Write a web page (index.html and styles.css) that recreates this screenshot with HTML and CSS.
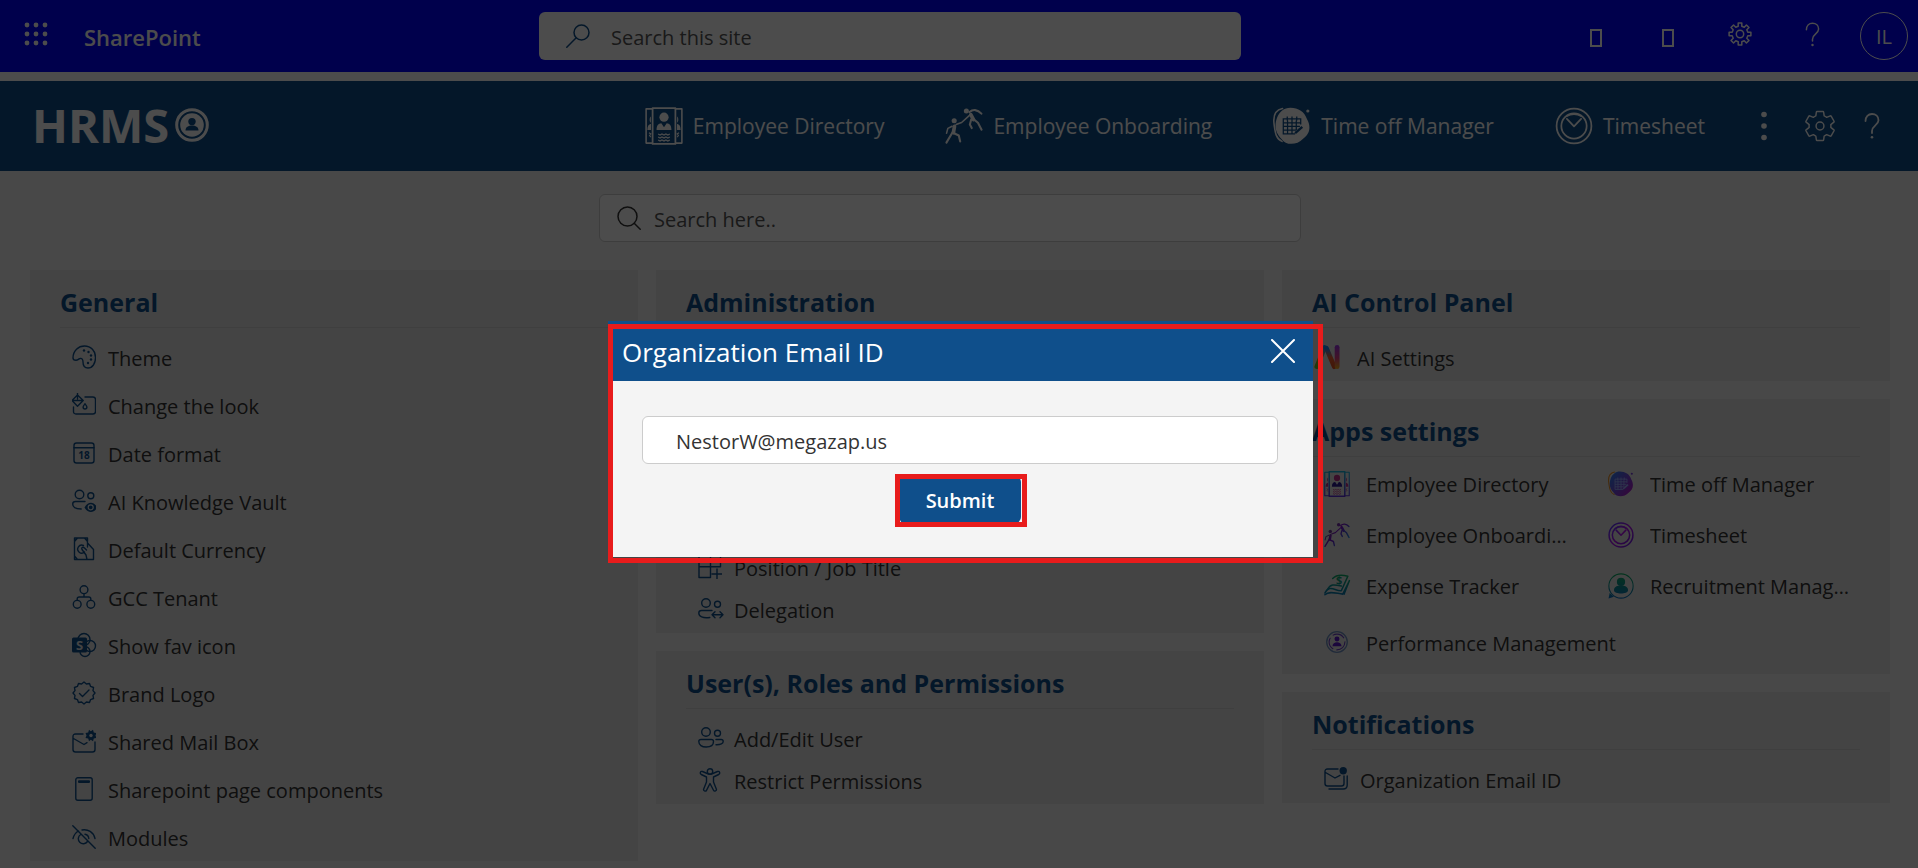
FILE: index.html
```html
<!DOCTYPE html>
<html lang="en">
<head>
<meta charset="utf-8">
<title>HRMS Settings</title>
<link rel="stylesheet" href="styles.css">
</head>
<body>
<svg class="sprite" aria-hidden="true">
  <defs>
    <linearGradient id="g-violet" gradientUnits="userSpaceOnUse" x1="0" y1="0" x2="24" y2="24"><stop offset="0" stop-color="#3b3bff"/><stop offset=".5" stop-color="#b010e8"/><stop offset="1" stop-color="#5a20e0"/></linearGradient>
    <linearGradient id="g-frame" gradientUnits="userSpaceOnUse" x1="0" y1="0" x2="0" y2="24"><stop offset="0" stop-color="#18b6d8"/><stop offset="1" stop-color="#5c2bd6"/></linearGradient>
    <linearGradient id="g-climb" gradientUnits="userSpaceOnUse" x1="6" y1="2" x2="24" y2="16"><stop offset="0" stop-color="#6a6a6a"/><stop offset=".4" stop-color="#7a10c8"/><stop offset="1" stop-color="#1296e0"/></linearGradient>
    <linearGradient id="g-green" gradientUnits="userSpaceOnUse" x1="0" y1="0" x2="0" y2="24"><stop offset="0" stop-color="#10b060"/><stop offset="1" stop-color="#0a6cc0"/></linearGradient>
    <linearGradient id="g-blob" gradientUnits="userSpaceOnUse" x1="2" y1="4" x2="22" y2="20"><stop offset="0" stop-color="#2f7df0"/><stop offset="1" stop-color="#b018c8"/></linearGradient>
    <linearGradient id="g-a" x1="0" y1="1" x2="1" y2="0"><stop offset="0" stop-color="#6ac030"/><stop offset=".5" stop-color="#f0a020"/><stop offset="1" stop-color="#2090f0"/></linearGradient>
    <linearGradient id="g-n" x1="0" y1="0" x2="0" y2="1"><stop offset="0" stop-color="#2080f0"/><stop offset=".5" stop-color="#f06030"/><stop offset="1" stop-color="#e05020"/></linearGradient>
    <linearGradient id="g-i" gradientUnits="userSpaceOnUse" x1="0" y1="0" x2="0" y2="24"><stop offset="0" stop-color="#9030e8"/><stop offset=".6" stop-color="#e04080"/><stop offset="1" stop-color="#f0a020"/></linearGradient>
  </defs>
  <symbol id="waffle" viewBox="0 0 24 24"><g class="f"><circle cx="3" cy="3" r="2.400"/><circle cx="12" cy="3" r="2.400"/><circle cx="21" cy="3" r="2.400"/><circle cx="3" cy="12" r="2.400"/><circle cx="12" cy="12" r="2.400"/><circle cx="21" cy="12" r="2.400"/><circle cx="3" cy="21" r="2.400"/><circle cx="12" cy="21" r="2.400"/><circle cx="21" cy="21" r="2.400"/></g></symbol>
  <symbol id="search-left" viewBox="0 0 24 24"><circle class="s" cx="15.500" cy="8.500" r="7.500"/><path class="s" d="M10.200 13.800.800 23.200"/></symbol>
  <symbol id="search" viewBox="0 0 24 24"><circle class="s" cx="10.500" cy="10.500" r="9.500"/><path class="s" d="m17.200 17.200 6 6"/></symbol>
  <symbol id="gear8" viewBox="0 0 24 24"><path class="s" d="M10.200 4.200V1.100h3.600v3.100l2.440 1.010 2.190-2.190 2.550 2.550-2.190 2.190 1.010 2.440h3.100v3.600h-3.100l-1.010 2.440 2.190 2.190-2.550 2.550-2.190-2.190-2.440 1.010v3.100h-3.600v-3.100l-2.440-1.010-2.190 2.190-2.550-2.550 2.190-2.190L4.200 13.800H1.100v-3.600h3.100l1.010-2.440-2.190-2.190 2.550-2.550 2.190 2.190z"/><circle class="s" cx="12" cy="12" r="3.700"/></symbol>
  <symbol id="gear6" viewBox="1 1 22 22"><path class="s thin" d="M19.430 12.980c.04-.32.07-.64.07-.98 0-.34-.03-.66-.07-.98l2.110-1.650c.19-.15.24-.42.12-.64l-2-3.460c-.09-.16-.26-.25-.44-.25-.06 0-.12.01-.17.03l-2.490 1c-.52-.4-1.080-.73-1.690-.98l-.38-2.650C14.460 2.180 14.250 2 14 2h-4c-.25 0-.46.18-.49.42l-.38 2.650c-.61.25-1.170.59-1.690.98l-2.490-1c-.06-.02-.12-.03-.18-.03-.17 0-.34.09-.43.25l-2 3.460c-.13.22-.07.49.12.64l2.110 1.650c-.04.32-.07.65-.07.98 0 .33.03.66.07.98l-2.110 1.650c-.19.15-.24.42-.12.64l2 3.460c.09.16.26.25.44.25.06 0 .12-.01.17-.03l2.490-1c.52.4 1.080.73 1.690.98l.38 2.650c.03.24.24.42.49.42h4c.25 0 .46-.18.49-.42l.38-2.650c.61-.25 1.170-.59 1.690-.98l2.490 1c.06.02.12.03.18.03.17 0 .34-.09.43-.25l2-3.460c.12-.22.07-.49-.12-.64z"/><circle class="s thin" cx="12" cy="12" r="2.700"/></symbol>
  <symbol id="question" viewBox="0 0 16 26"><path class="s" d="M1.500 8C1.500 3.500 4.300 1 8 1s6.500 2.500 6.500 6.200c0 5-6.500 5.300-6.500 10.800v2"/><circle class="f" cx="8" cy="24.200" r="1.300"/></symbol>
  <symbol id="dots" viewBox="0 0 6 30"><g class="f"><circle cx="3" cy="3.500" r="2.800"/><circle cx="3" cy="15" r="2.800"/><circle cx="3" cy="26.500" r="2.800"/></g></symbol>
  <symbol id="person-ring" viewBox="0 0 34 34"><circle class="s" stroke-width="3" cx="17" cy="17" r="15.300"/><circle class="f" cx="17" cy="17" r="11.800"/><circle cx="17" cy="13.600" r="3.700" fill="#0f4f8b"/><path d="M10.500 22.500c0-3.600 2.900-5 6.500-5s6.500 1.400 6.500 5z" fill="#0f4f8b"/></symbol>
  <symbol id="directory" viewBox="0 0 24 24"><path class="s thin" d="M4.500 1.200H.7v21.600h3.800M19.500 1.200h3.800v21.600h-3.800"/><rect class="s" x="4.800" y=".7" width="14.400" height="22.600"/><g class="f2"><circle cx="12" cy="6.400" r="2.900"/><path d="M3.700 6v4c-1-.6-1-3.400 0-4zM20.300 6v4c1-.6 1-3.400 0-4zM1.500 14.500c0-2.500.8-3.700 2.300-4v4zM22.500 14.500c0-2.500-.8-3.700-2.300-4v4z"/></g><path class="f3" d="M7.300 14.500c0-3 1.200-4.200 3-4.300l1.700 2.600 1.700-2.600c1.800.1 3 1.300 3 4.300z"/><path class="s2" d="m8.300 17 1.200.7 1.200-.7 1.300.7 1.200-.7 1.200.7 1.300-.7M8.300 18.900l1.200.7 1.200-.7 1.300.7 1.200-.7 1.200.7 1.300-.7M8.300 20.800l1.200.7 1.200-.7 1.300.7 1.200-.7 1.200.7 1.300-.7M2.500 16.300l1.200.7-.8 1 .8 1M21.500 16.300l-1.200.7.8 1-.8 1" stroke-width=".7"/></symbol>
  <symbol id="climb" viewBox="0 0 24 24"><circle class="f" cx="5.800" cy="8.700" r="1.600"/><circle class="f" cx="13.500" cy="2.500" r="1.600"/><path class="s" stroke-width="1" d="m7 11 3.500-1.200 4.800-4.300M4.500 12.200 1.800 13.500l-.8 3"/><path class="s" stroke-width="2.300" d="m6 12.200-.7 4M16.300 4.800 18 8"/><path class="s" stroke-width="1.300" d="M4.800 16 .9 22.500M5 16.300l3.700 1.700.9 3.800M15.500 3.200c2-1.800 5-1.800 7.500 1M16.500 8l-.8 3 1.200 2.300M18.500 8l2.300 2 2.300 4.300"/></symbol>
  <symbol id="timeoff" viewBox="0 0 24 24"><path class="s thin" style="stroke:var(--rim)" d="M6 1C1 2 0 6 .7 11s1 9 5 10.700"/><circle class="f" cx="22" cy="2.500" r="1"/><path class="f" d="M11 .5c5 0 9 2.500 10.500 7.300C24 12 23.500 17 19 20c-4 4.300-11 4.300-13.500.3C1 16 1 11 2.500 7 4 3 7 .5 11 .5z"/><g style="stroke:var(--cut)" fill="none" stroke-width=".8"><path d="M17.500 11V7.500h-11V17H14M9 6v2.500M12 6v2.500M15 6v2.500M6.500 10h11M6.500 12.300h10.500M6.500 14.600h8M9.200 8.500V17M12 8.500V17M14.700 8.500v6"/><path d="m14 16.500 4.500-4" stroke-width="1.500"/></g></symbol>
  <symbol id="clock" viewBox="0 0 24 24"><circle class="s" cx="12" cy="12" r="11"/><circle class="s" cx="12" cy="12" r="8"/><path class="s" d="m7.500 7.500 4.500 4.700 4.500-4.700M7.500 5.700c2.500-1.700 6.500-1.700 9 0"/></symbol>
  <symbol id="palette" viewBox="0 0 24 24"><path class="s" d="M1 13C1 5.500 6.500 1 12.500 1 19 1 23.500 6 23.500 12.500c0 6-3 10.500-7.500 10.500-3.500 0-5-2.500-5-6 0-2.500-1-4-3-3.500-1.500.3-2 1.800-4 1.800C1.800 15.300 1 14.500 1 13z"/><g class="f"><circle cx="12" cy="5.500" r="1.200"/><circle cx="16.500" cy="7" r="1.200"/><circle cx="19" cy="10.500" r="1.200"/><circle cx="19" cy="14.500" r="1.200"/><circle cx="16" cy="18" r="1.200"/></g></symbol>
  <symbol id="bucket" viewBox="0 0 24 24"><path class="s" d="M13 4h8q2.500 0 2.500 2.500v12Q23.500 21 21 21H4q-2.500 0-2.500-2.500V14M5.500 0v6M5.500 2 0 7.500l5.500 5.800L11.200 7.500zM.5 7.500h10.500M13 10.800c1.200 1.500 1.900 2.300 1.900 3.300a1.900 1.900 0 0 1-3.800 0c0-1 .7-1.800 1.900-3.300z"/></symbol>
  <symbol id="people-eye" viewBox="0 0 24 24"><circle class="s" cx="7.500" cy="5.500" r="4.300"/><circle class="s" cx="18.800" cy="6.800" r="3"/><path class="s" d="M13 12.500H3.500Q.7 12.500.7 15c0 3.500 3.500 5 8.500 5"/><path class="f" d="M12.500 18.500c3-6.500 10-6.500 12.500 0-2.500 6-9.500 6-12.500 0z"/><circle class="s" cx="18.700" cy="18.300" r="2.500" style="stroke:#e5e5e5" stroke-width="1.200"/></symbol>
  <symbol id="cash-hand" viewBox="0 0 24 24"><path class="s" d="M15.500 22.500h-13V1h13v9M2.500 4.500 5.500 1M15.500 4.500 12.500 1M2.500 19l3 3.500M11.500 8.500a4 4 0 1 0 1 6.500M16 6.500l5.500 6v10H15l-1-4.500-4-5.500c-1-2 1-3 2.500-1.500l2 2"/></symbol>
  <symbol id="tree" viewBox="0 0 24 24"><g class="s"><circle cx="12" cy="4.700" r="3.900"/><circle cx="5.200" cy="19.300" r="3.900"/><circle cx="18.800" cy="19.300" r="3.900"/><path d="M12 8.600V12M5.200 15.200V14q0-2 2-2h9.600q2 0 2 2v1.200"/></g></symbol>
  <symbol id="badge" viewBox="0 0 24 24"><path class="s" d="m12 1 2.410 2.020 3.090-.55 1.080 2.950L21.530 6.500l-.55 3.090L23 12l-2.020 2.410.55 3.090-2.950 1.080-1.080 2.950-3.090-.55L12 23l-2.410-2.020-3.090.55-1.080-2.950L2.470 17.500l.55-3.090L1 12l2.020-2.410-.55-3.090 2.950-1.080L6.500 2.470l3.090.55zM7.500 12.500l3 3 6.500-6.500"/></symbol>
  <symbol id="mail-gear" viewBox="0 0 24 24"><path class="s" d="M11 5H3.500Q1 5 1 7.500v13Q1 23 3.500 23h17q2.500 0 2.500-2.500V13M1.500 9.500 12 15.500l3-1.800"/><path class="f" d="m17 .8 1.800 1.400 2.200-1.400.8 2.700 2.700.5-1 2.500 1 2.500-2.700.5-.8 2.700-2.200-1.400L17 12.200l-.8-2.700-2.700-.5 1-2.500-1-2.500 2.700-.5z"/><circle cx="19" cy="6.500" r="1.700" fill="#e5e5e5"/></symbol>
  <symbol id="page" viewBox="0 0 24 24"><rect class="s" x="3.800" y=".8" width="16.400" height="22.400" rx="2"/><rect class="f" x="6" y="3.200" width="12" height="2.800" rx="1"/></symbol>
  <symbol id="eye-off" viewBox="0 0 24 24"><path class="s" d="m.8.800 22.400 22.400M1 13.500C2 9.500 4 7.300 6.500 6M10 5c6-1 11.500 2 13 8.500M8.700 9.500a5 5 0 1 0 6.800 7M13 9.200q3.500.5 3.800 4.300"/></symbol>
  <symbol id="grid-add" viewBox="0 0 24 24"><path class="s" d="M1 1h21.500v10.800H1zM1 11.800V22.500h11.500V1M19 14v10M14 19h10"/></symbol>
  <symbol id="delegation" viewBox="0 0 26 24"><circle class="s" cx="8" cy="6" r="4.300"/><circle class="s" cx="19.500" cy="7.200" r="3"/><path class="s" d="M14 13.500H3.500Q.8 13.500.8 16c0 3.500 4 5.500 11 4.500M14 17.800h11M17 14.800l-3 3 3 3M22 14.800l3 3-3 3"/></symbol>
  <symbol id="users" viewBox="0 0 26 24"><g class="s"><circle cx="8" cy="6" r="4.300"/><circle cx="19.500" cy="7.200" r="3"/><path d="M3 13.500h10.500q2 0 2 2c0 3.500-3 5.500-7.300 5.500S.8 19 .8 15.500q0-2 2.200-2zM18 13.500h5.200q2 0 2 2c0 2-2.500 3.500-7.200 3.300"/></g></symbol>
  <symbol id="body" viewBox="0 0 24 24"><path class="s" d="M9.200 5.500 4.500 3.500c-2-.8-3 2-1.200 3L8.500 9v5L5.700 21c-.7 2 2 2.800 2.800 1.300L12 15.500l3.500 6.800c.8 1.500 3.500.7 2.800-1.300L15.500 14V9l5.200-2.500c1.800-1 .8-3.800-1.200-3l-4.700 2c-1.600.7-4 .7-5.600 0z"/><circle class="s" cx="12" cy="3.500" r="2.700"/></symbol>
  <symbol id="ai" viewBox="0 0 27 26"><g fill="none" stroke-width="5" stroke-linecap="round"><path stroke="url(#g-a)" d="M3 23 11 3"/><path stroke="url(#g-n)" d="m13 4 8 19"/><path stroke="url(#g-i)" d="M24 3v20"/></g></symbol>
  <symbol id="recruit" viewBox="0 0 24 24"><circle class="s thin" cx="12" cy="12" r="11.200"/><circle class="f" cx="12" cy="8.200" r="3.800"/><path class="f" d="M5.500 16c0-3.500 3-4.500 6.500-4.500s6.500 1 6.500 4.500c0 4-13 4-13 0z"/><path class="f" d="m.5 23.500 1-5 4 3.500z"/></symbol>
  <symbol id="perf" viewBox="0 0 24 24"><circle cx="12" cy="12" r="9.500" fill="none" stroke="#6f8fc0" stroke-width="1.200"/><circle cx="12" cy="12" r="7.300" fill="none" stroke="#6a40c0" stroke-width="1" stroke-dasharray="12 3"/><circle cx="12" cy="9.300" r="2.300" fill="#5a18c8"/><path d="M7.800 16c0-5 8.400-5 8.400 0z" fill="#5a18c8"/></symbol>
  <symbol id="mail-dot" viewBox="0 0 24 24"><path class="s" d="M14 2H3.500Q1 2 1 4.500v12Q1 19 3.500 19h14q2.500 0 2.500-2.500V9M1.500 5.500 11 11l5-2.700M23.200 9v9q0 4-4 4H5"/><circle class="f" cx="19.200" cy="3.700" r="3.700"/></symbol>
  <symbol id="close" viewBox="0 0 24 24"><path class="s" stroke-width="2" d="m1 1 22 22M23 1 1 23"/></symbol>
</svg>

<header class="suite">
  <div class="suite-brand">
    <button class="plain" type="button" aria-label="App launcher"><svg class="ic24"><use href="#waffle"/></svg></button>
    <a class="suite-name" href="#">SharePoint</a>
  </div>
  <label class="suite-search"><svg class="ic24"><use href="#search-left"/></svg><input type="search" placeholder="Search this site" aria-label="Search this site"></label>
  <div class="suite-tools">
    <button class="plain" type="button" aria-label="Notifications"><span class="tofu"></span></button>
    <button class="plain" type="button" aria-label="Megaphone"><span class="tofu"></span></button>
    <button class="plain" type="button" aria-label="Settings"><svg class="ic24"><use href="#gear8"/></svg></button>
    <button class="plain" type="button" aria-label="Help"><svg class="q-small"><use href="#question"/></svg></button>
    <button class="avatar" type="button">IL</button>
  </div>
</header>

<nav class="nav">
  <a class="logo" href="#">HRMS<svg class="logo-ring"><use href="#person-ring"/></svg></a>
  <div class="nav-right">
    <div class="nav-links">
      <a href="#"><svg class="ic38"><use href="#directory"/></svg>Employee Directory</a>
      <a href="#"><svg class="ic38"><use href="#climb"/></svg>Employee Onboarding</a>
      <a href="#"><svg class="ic38"><use href="#timeoff"/></svg>Time off Manager</a>
      <a href="#"><svg class="ic38"><use href="#clock"/></svg>Timesheet</a>
    </div>
    <div class="nav-tools">
      <button class="plain" type="button" aria-label="More"><svg class="more"><use href="#dots"/></svg></button>
      <button class="plain" type="button" aria-label="Settings"><svg class="ic32"><use href="#gear6"/></svg></button>
      <button class="plain" type="button" aria-label="Help"><svg class="q-large"><use href="#question"/></svg></button>
    </div>
  </div>
</nav>

<main class="page">
  <label class="page-search"><svg class="ic24"><use href="#search"/></svg><input type="search" placeholder="Search here.." aria-label="Search here"></label>
  <div class="columns">
    <div class="column">
      <section class="card">
        <h2>General</h2>
        <ul class="list roomy">
          <li><a href="#"><svg class="ic-item"><use href="#palette"/></svg>Theme</a></li>
          <li><a href="#"><svg class="ic-item"><use href="#bucket"/></svg>Change the look</a></li>
          <li><a href="#"><svg class="ic-item" viewBox="0 0 24 24" aria-hidden="true"><rect class="s" x="2" y="2" width="20" height="20" rx="2.500"/><path class="s" d="M2 6.800h20"/><text class="f" x="12" y="18" text-anchor="middle" font-size="10" font-weight="700">18</text></svg>Date format</a></li>
          <li><a href="#"><svg class="ic-item"><use href="#people-eye"/></svg>AI Knowledge Vault</a></li>
          <li><a href="#"><svg class="ic-item"><use href="#cash-hand"/></svg>Default Currency</a></li>
          <li><a href="#"><svg class="ic-item"><use href="#tree"/></svg>GCC Tenant</a></li>
          <li><a href="#"><svg class="ic-item" viewBox="0 0 24 24" aria-hidden="true"><circle class="s" cx="12" cy="6.500" r="6"/><circle class="s" cx="18" cy="13" r="5.500"/><circle class="s" cx="13" cy="18.500" r="5"/><rect x="0" y="4.500" width="15" height="15" rx="1.500" class="f"/><text x="7.500" y="16.500" text-anchor="middle" font-size="13" font-weight="700" fill="#e5e5e5">S</text></svg>Show fav icon</a></li>
          <li><a href="#"><svg class="ic-item"><use href="#badge"/></svg>Brand Logo</a></li>
          <li><a href="#"><svg class="ic-item"><use href="#mail-gear"/></svg>Shared Mail Box</a></li>
          <li><a href="#"><svg class="ic-item"><use href="#page"/></svg>Sharepoint page components</a></li>
          <li><a href="#"><svg class="ic-item"><use href="#eye-off"/></svg>Modules</a></li>
        </ul>
      </section>
    </div>
    <div class="column">
      <section class="card tall">
        <h2>Administration</h2>
        <ul class="list compact">
          <li><a href="#"><svg class="ic-item"><use href="#grid-add"/></svg>Position / Job Title</a></li>
          <li><a href="#"><svg class="ic-people"><use href="#delegation"/></svg>Delegation</a></li>
        </ul>
      </section>
      <section class="card">
        <h2>User(s), Roles and Permissions</h2>
        <ul class="list compact">
          <li><a href="#"><svg class="ic-people"><use href="#users"/></svg>Add/Edit User</a></li>
          <li><a href="#"><svg class="ic-item"><use href="#body"/></svg>Restrict Permissions</a></li>
        </ul>
      </section>
    </div>
    <div class="column">
      <section class="card">
        <h2>AI Control Panel</h2>
        <ul class="list roomy ai-list">
          <li><a href="#"><svg class="ic-people"><use href="#ai"/></svg>AI Settings</a></li>
        </ul>
      </section>
      <section class="card">
        <h2>Apps settings</h2>
        <ul class="apps">
          <li><a href="#"><svg class="ic-people c-dir"><use href="#directory"/></svg><span>Employee Directory</span></a></li>
          <li><a href="#"><svg class="ic-people c-off"><use href="#timeoff"/></svg><span>Time off Manager</span></a></li>
          <li><a href="#"><svg class="ic-people c-climb"><use href="#climb"/></svg><span>Employee Onboarding</span></a></li>
          <li><a href="#"><svg class="ic-people c-clock"><use href="#clock"/></svg><span>Timesheet</span></a></li>
          <li><a href="#"><svg class="ic-people c-green" viewBox="0 0 24 24" aria-hidden="true"><path class="s" d="M.8 18.500C3.500 13 7 14 11 15.500c2.500 1 5 .8 5 .8L22 3c-5-1.500-10-2-14 2"/><path class="s" d="M3 15.500C6 10 9 10.500 16 12M.8 20c4-4 11-1 16.500-.5L23.500 7l-5 12.500"/><text class="f" x="14" y="10.500" text-anchor="middle" font-size="10" font-weight="700">$</text></svg><span>Expense Tracker</span></a></li>
          <li><a href="#"><svg class="ic-people c-green"><use href="#recruit"/></svg><span>Recruitment Management</span></a></li>
          <li class="wide"><a href="#"><svg class="ic-people"><use href="#perf"/></svg><span>Performance Management</span></a></li>
        </ul>
      </section>
      <section class="card">
        <h2>Notifications</h2>
        <ul class="list roomy">
          <li><a href="#"><svg class="ic-item"><use href="#mail-dot"/></svg>Organization Email ID</a></li>
        </ul>
      </section>
    </div>
  </div>
</main>

<div class="overlay">
  <form class="modal" role="dialog" aria-labelledby="dialog-title">
    <div class="modal-head">
      <h1 id="dialog-title">Organization Email ID</h1>
      <button class="plain" type="button" aria-label="Close"><svg class="ic24"><use href="#close"/></svg></button>
    </div>
    <div class="modal-body">
      <input class="email" type="email" value="NestorW@megazap.us" aria-label="Organization Email ID">
      <div class="submit-wrap"><button class="submit" type="submit">Submit</button><span class="mark mark-submit"></span></div>
    </div>
    <span class="mark mark-modal"></span>
  </form>
</div>
</body>
</html>
```
FILE: styles.css
```css
* { box-sizing: border-box; }
html, body { margin: 0; height: 100%; overflow: hidden; }
body {
  background: #f2f2f2;
  color: #333;
  font: 20px/28px "Open Sans", "Noto Sans", sans-serif;
}
a { color: inherit; text-decoration: none; }
ul { list-style: none; margin: 0; padding: 0; }
svg { flex: none; display: block; overflow: visible; }
input { font: inherit; color: inherit; border: 0; background: none; outline: 0; padding: 0; min-width: 0; }
input::placeholder { color: #555; opacity: 1; }
.sprite { position: absolute; width: 0; height: 0; }
.plain { border: 0; padding: 0; background: none; color: inherit; display: block; }

/* icon inks */
.s { fill: none; stroke: var(--ink, currentColor); stroke-linecap: round; stroke-linejoin: round; }
.s2 { fill: none; stroke: var(--ink2, var(--ink, currentColor)); }
.thin { stroke-width: 1; }
.f { fill: var(--ink, currentColor); }
.f2 { fill: var(--ink2, var(--ink, currentColor)); }
.f3 { fill: var(--ink3, var(--ink, currentColor)); }
.ic24 { width: 24px; height: 24px; stroke-width: 1.5; }
.ic-item { width: 24px; height: 24px; margin-right: 2px; stroke-width: 1.4; }
.ic-people { width: 26px; height: 26px; stroke-width: 1.4; }
.ic-item text { stroke: none; }
.ic-people text { stroke: none; }
.ic32 { width: 32px; height: 32px; }
.ic38 { width: 38px; height: 38px; --cut: #0f4f8b; --rim: #fff; }
.q-small { width: 15px; height: 25px; stroke-width: 1.6; }
.q-large { width: 16px; height: 26px; stroke-width: 1.8; }
.more { width: 6px; height: 30px; }

/* suite bar */
.suite {
  display: grid;
  grid-template-columns: 539px minmax(0, 702px) 1fr;
  align-items: center;
  height: 72px;
  background: #00f;
  color: #fff;
}
.suite-brand { display: flex; align-items: center; gap: 36px; padding-left: 24px; }
.suite-brand .plain { margin-bottom: 5px; }
.suite-name { font-size: 22px; font-weight: 600; padding-top: 2px; }
.suite-search, .page-search {
  display: flex;
  align-items: center;
  height: 48px;
  border-radius: 6px;
  background: #fff;
  color: #333;
}
.suite-search { gap: 21px; padding: 0 27px; }
.suite-search svg { color: #0f4f8b; }
.suite-search input, .page-search input { flex: 1; padding-top: 3px; }
.suite-tools { display: flex; align-items: center; justify-content: flex-end; gap: 24px; padding-right: 10px; }
.suite-tools .plain { width: 48px; display: flex; justify-content: center; }
.suite-tools svg { margin-bottom: 4px; }
.tofu { display: block; width: 12px; height: 18px; border: 2px solid #fff; margin-top: 3px; }
.avatar {
  width: 48px;
  height: 48px;
  border: 1px solid #fff;
  border-radius: 50%;
  background: none;
  color: inherit;
  font: 400 20px/24px "Open Sans", sans-serif;
  padding: 2px 0 0;
}

/* site navigation */
.nav {
  display: flex;
  align-items: center;
  justify-content: space-between;
  height: 99px;
  border-top: 9px solid #fff;
  padding: 0 38px 0 32px;
  background: #0f4f8b;
  color: #fff;
}
.logo { display: flex; align-items: center; gap: 6px; font-size: 47px; line-height: 60px; font-weight: 700; padding-bottom: 2px; }
.logo-ring { width: 34px; height: 34px; }
.nav-right { display: flex; align-items: center; gap: 56px; }
.nav-links { display: flex; gap: 61px; font-size: 21px; }
.nav-links a { display: flex; align-items: center; gap: 10px; }
.nav-links svg { stroke-width: 1.1; }
.nav-tools { display: flex; align-items: center; gap: 37px; }
.nav-tools .plain:last-child { margin-left: -9px; }

/* page */
.page { padding: 23px 28px 0 30px; }
.page-search {
  width: 702px;
  margin: 0 auto 28px 569px;
  border: 1px solid #ccc;
  gap: 13px;
  padding: 0 17px;
}
.columns { display: grid; grid-template-columns: repeat(3, minmax(0, 1fr)); gap: 18px; align-items: start; }
.column { display: flex; flex-direction: column; gap: 18px; }
.card { background: #e5e5e5; padding: 0 30px; }
.card h2 {
  margin: 0;
  padding: 15px 0 7px;
  border-bottom: 1px solid #d4d4d4;
  color: #0f4f8b;
  font-size: 25px;
  line-height: 35px;
  font-weight: 700;
}
.card svg { color: #0f4f8b; margin-bottom: 3px; }
.list a { display: flex; align-items: center; gap: 10px; padding: 3px 0 0 12px; }
.roomy { padding-top: 5px; }
.roomy a { height: 48px; }
.compact { padding: 8px 0 3px; }
.compact a { height: 42px; }
.ai-list a { padding-left: 2px; gap: 17px; }
.tall { display: flex; flex-direction: column; justify-content: space-between; min-height: 363px; }
.apps { display: grid; grid-template-columns: 284px minmax(0, 1fr); padding-top: 2px; }
.apps a { display: flex; align-items: center; gap: 16px; height: 51px; padding: 1px 0 0 12px; }
.apps span { max-width: 202px; overflow: hidden; text-overflow: ellipsis; white-space: nowrap; }
.apps .wide { grid-column: 1 / -1; }
.apps .wide a { height: 62px; }
.apps .wide span { max-width: none; }
.c-dir { --ink: url(#g-frame); --ink2: #c0308a; --ink3: #2c1a90; }
.c-off { --ink: url(#g-blob); --cut: #9ab0ff; --rim: #e8902a; }
.c-climb { --ink: url(#g-climb); }
.c-clock { --ink: url(#g-violet); }
.c-green { --ink: url(#g-green); }

/* dialog */
.overlay {
  position: fixed;
  inset: 0;
  display: flex;
  align-items: flex-start;
  justify-content: center;
  padding: 321px 0 0 3px;
  background: rgba(0, 0, 0, .7);
}
.modal { position: relative; width: 705px; background: #f4f4f4; }
.modal-head {
  display: flex;
  align-items: center;
  justify-content: space-between;
  height: 60px;
  padding: 0 18px 0 14px;
  background: #0f4f8b;
  color: #fff;
}
.modal-head h1 { margin: 0; font-size: 26px; line-height: 34px; font-weight: 400; padding-top: 2px; }
.modal-body { padding: 35px 35px 34px 34px; }
.email {
  display: block;
  width: 100%;
  height: 48px;
  padding: 2px 34px 0 33px;
  border: 1px solid #ccc;
  border-radius: 6px;
  background: #fff;
}
.submit-wrap { position: relative; width: 122px; margin: 12px auto 0; }
.submit {
  display: block;
  width: 100%;
  height: 47px;
  border: 0;
  border-radius: 6px;
  background: #0f4f8b;
  color: #fff;
  font: 600 20px/28px "Open Sans", sans-serif;
  padding: 2px 0 0;
}
.mark { position: absolute; border: 5px solid #e81c1c; pointer-events: none; }
.mark-modal { inset: 3px -10px -6px 0; }
.mark-submit { inset: -2px -6px -4px -4px; }
```
